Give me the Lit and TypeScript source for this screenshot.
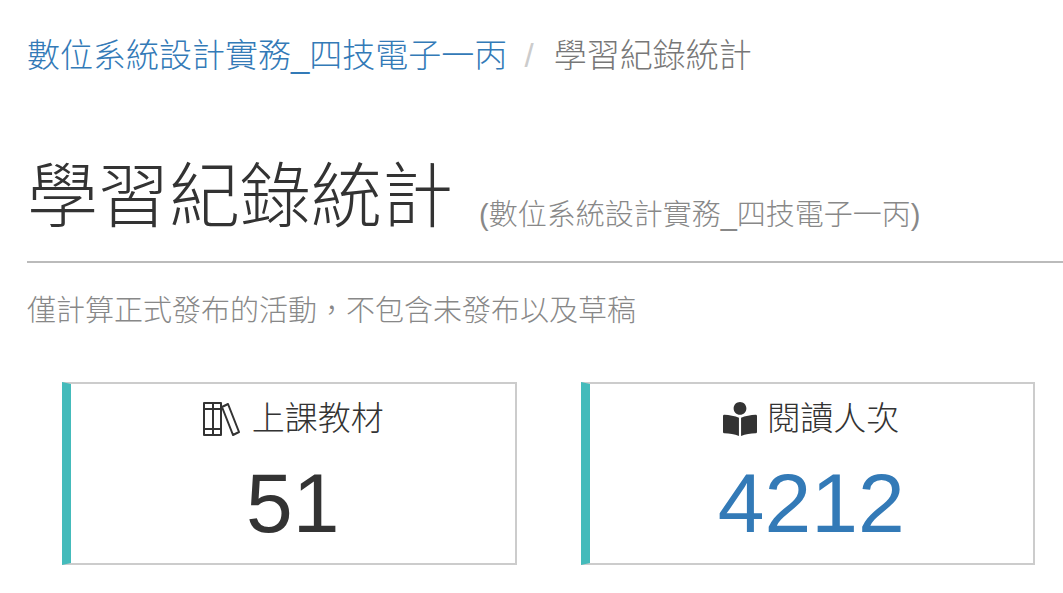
import { LitElement, html, css, svg } from "lit";
import { customElement } from "lit/decorators.js";

const booksIcon = svg`
  <g fill="none" stroke="currentColor" stroke-width="2" stroke-linejoin="round">
    <path d="M2 2h9v32H2zM11 2h8v32h-8zM2 8h17M2 28h17M20 6l6-3 11 28-6 3z"/>
  </g>`;
const readerIcon = svg`
  <path fill="currentColor" d="M352 96c0-53-43-96-96-96s-96 43-96 96 43 96 96 96 96-43 96-96zM240 238c-58-30-150-42-216-46-14 0-24 8-24 20v238c0 12 10 20 24 21 70 4 150 12 216 41zM272 238c58-30 150-42 216-46 14 0 24 8 24 20v238c0 12-10 20-24 21-70 4-150 12-216 41z"/>`;

@customElement("app-root")
export class AppRoot extends LitElement {
  static styles = css`
    :host {
      display: block;
      padding: 34px 0 28px 27px;
      background: #fff;
      color: #333;
      font-family: "Liberation Sans", "Noto Sans CJK TC", sans-serif;
      font-weight: 300;
    }
    a { color: #337ab7; text-decoration: none; }
    .crumbs { font-size: 33px; line-height: 44px; color: #777; white-space: nowrap; }
    .sep { color: #ccc; padding: 0 20px 0 8px; }
    header { display: flex; align-items: flex-end; gap: 26px; margin-top: 75px; padding-bottom: 20px; border-bottom: 2px solid #bbb; white-space: nowrap; }
    h1 { margin: 0; font-size: 71px; line-height: 88px; font-weight: 300; }
    .sub { font-size: 29px; line-height: 52px; color: #888; }
    .note { margin: 28px 0 0; font-size: 29px; line-height: 40px; color: #888; }
    .cards { display: grid; grid-template-columns: 1fr 1fr; gap: 64px; margin: 51px 28px 0 35px; }
    .card { box-sizing: border-box; border: 2px solid #ccc; border-left: 9px solid #44bbbb; padding: 12px 0; text-align: center; }
    .label { display: flex; justify-content: center; align-items: center; gap: 10px; font-size: 33px; line-height: 46px; }
    .books { width: 40px; height: 36px; }
    .reader { width: 34px; height: 34px; }
    .value { font-size: 84px; line-height: 96px; margin-top: 13px; display: block; }
  `;
  render() {
    return html`
      <nav class="crumbs"><a href="#">數位系統設計實務_四技電子一丙</a><span class="sep"> /</span>學習紀錄統計</nav>
      <header><h1>學習紀錄統計</h1><span class="sub">(數位系統設計實務_四技電子一丙)</span></header>
      <p class="note">僅計算正式發布的活動，不包含未發布以及草稿</p>
      <section class="cards">
        <div class="card">
          <div class="label"><svg class="books" viewBox="0 0 40 36">${booksIcon}</svg>上課教材</div>
          <span class="value">51</span>
        </div>
        <div class="card">
          <div class="label"><svg class="reader" viewBox="0 0 512 512">${readerIcon}</svg>閱讀人次</div>
          <a class="value" href="#">4212</a>
        </div>
      </section>`;
  }
}
